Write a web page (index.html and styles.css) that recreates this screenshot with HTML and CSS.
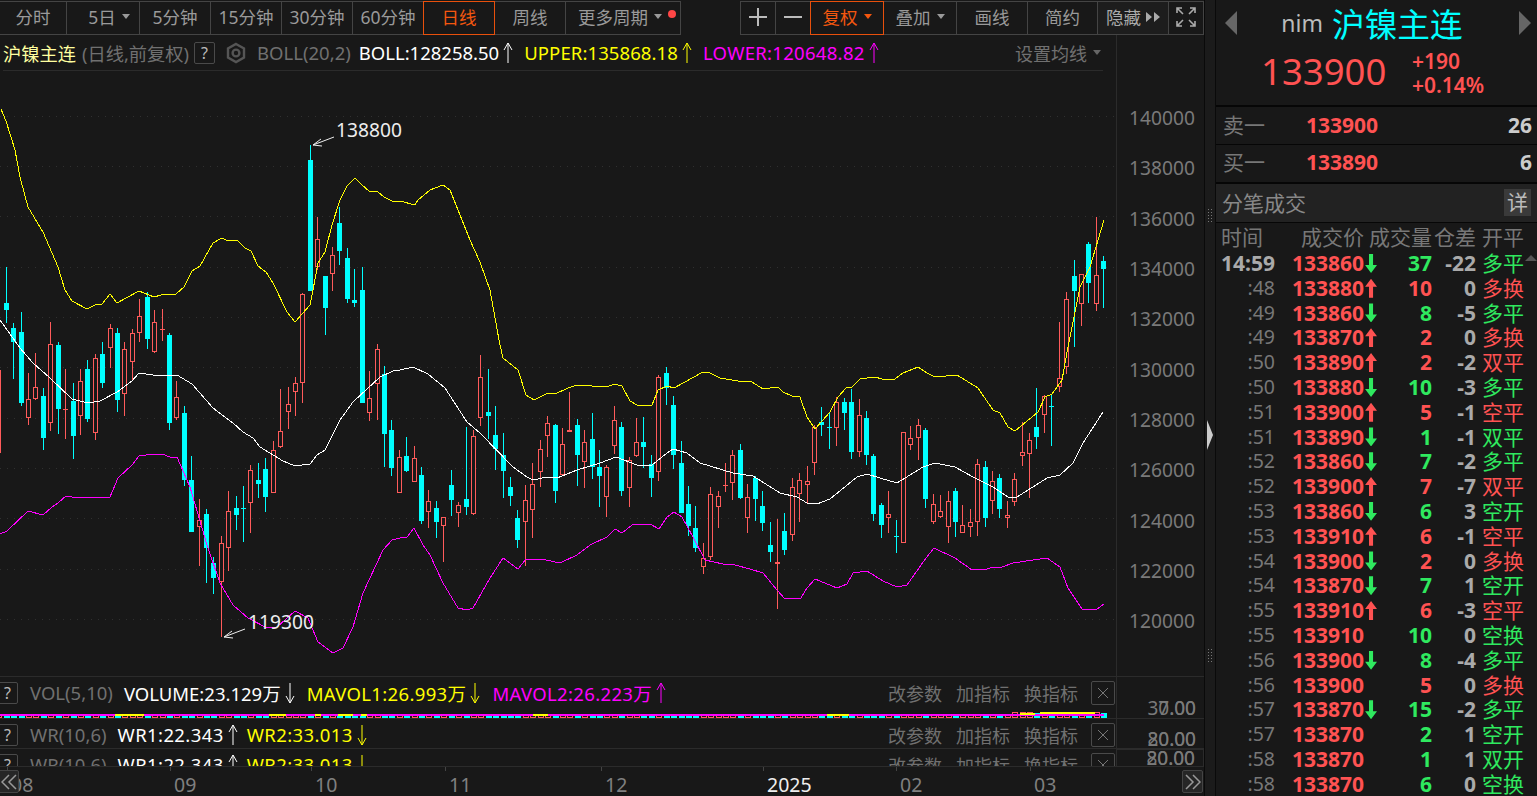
FILE: index.html
```html
<!DOCTYPE html>
<html lang="zh-CN">
  <head>
    <meta charset="UTF-8" />
    <meta name="viewport" content="width=device-width, initial-scale=1.0" />
    <title>沪镍主连 日线</title>
    <link rel="stylesheet" href="styles.css">
  </head>
  <body>
    <svg class="defs" width="0" height="0">
      <symbol id="up" viewBox="0 0 10 22"><path d="M5 1V21M1 8L5 1L9 8" fill="none" stroke="currentColor" /></symbol>
      <symbol id="down" viewBox="0 0 10 22"><path d="M5 1V21M1 14L5 21L9 14" fill="none" stroke="currentColor" /></symbol>
      <symbol id="close" viewBox="0 0 12 12"><path d="M1 1L11 11M11 1L1 11" fill="none" stroke="currentColor" /></symbol>
    </svg>

    <div class="left">
      <div class="toolbar">
        <div class="tool w68">分时</div>
        <div class="tool w74 pushed">5日<i class="caret"></i></div>
        <div class="tool w72">5分钟</div>
        <div class="tool w72">15分钟</div>
        <div class="tool w72">30分钟</div>
        <div class="tool w72">60分钟</div>
        <div class="tool w72 active">日线</div>
        <div class="tool w72">周线</div>
        <div class="tool w116 dotted">更多周期<i class="caret"></i></div>
        <div class="spacer"></div>
        <div class="tool w35">
          <svg width="18" height="18" viewBox="0 0 18 18"><path d="M0 9H18M9 0V18" stroke="#bbb" stroke-width="2" /></svg>
        </div>
        <div class="tool w35">
          <svg width="18" height="18" viewBox="0 0 18 18"><path d="M0 9H18" stroke="#bbb" stroke-width="2" /></svg>
        </div>
        <div class="tool w74 active">复权<i class="caret"></i></div>
        <div class="tool w74">叠加<i class="caret"></i></div>
        <div class="tool w72">画线</div>
        <div class="tool w71">简约</div>
        <div class="tool w72 hide">隐藏
          <svg width="14" height="12" viewBox="0 0 14 12"><path d="M0 1L6 6L0 11ZM8 1L14 6L8 11Z" fill="#aaa" /></svg>
        </div>
        <div class="tool w35">
          <svg width="22" height="22" viewBox="0 0 22 22" fill="none" stroke="#aaa" stroke-width="1.6">
            <path d="M2 7V2H7M2 2L8 8M15 2H20V7M20 2L14 8M2 15V20H7M2 20L8 14M15 20H20V15M20 20L14 14" />
          </svg>
        </div>
      </div>

      <div class="legend-row">
        <div class="legend main">
          <span class="name">沪镍主连</span>
          <span class="muted cn">(日线,前复权)</span>
          <span class="help">?</span>
          <svg class="gear" width="22" height="22" viewBox="0 0 22 22" fill="none" stroke="#555" stroke-width="2.4">
            <path d="M11 2L19 6.5V15.5L11 20L3 15.5V6.5Z" />
            <circle cx="11" cy="11" r="3.4" />
          </svg>
          <span class="muted ind">BOLL(20,2)</span>
          <span class="white">BOLL:128258.50</span><svg class="arr white"><use href="#up" /></svg>
          <span class="yellow">UPPER:135868.18</span><svg class="arr yellow"><use href="#up" /></svg>
          <span class="pink">LOWER:120648.82</span><svg class="arr pink"><use href="#up" /></svg>
          <span class="spacer"></span>
          <span class="link">设置均线</span><i class="caret"></i>
        </div>
      </div>

      <div class="chart-pane"><svg id="chart" width="1204" height="605" viewBox="0 71 1204 605"></svg></div>

      <div class="pane vol">
        <div class="pane-body">
          <div class="legend">
            <span class="help">?</span>
            <span class="muted ind">VOL(5,10)</span>
            <span class="white">VOLUME:23.129万</span><svg class="arr white"><use href="#down" /></svg>
            <span class="yellow">MAVOL1:26.993万</span><svg class="arr yellow"><use href="#down" /></svg>
            <span class="pink">MAVOL2:26.223万</span><svg class="arr pink"><use href="#up" /></svg>
            <span class="spacer"></span>
            <span class="link">改参数</span><span class="link">加指标</span><span class="link">换指标</span>
            <span class="x"><svg width="12" height="12"><use href="#close" /></svg></span>
          </div>
          <svg id="volume" width="1116" height="9" viewBox="0 710 1116 9"></svg>
        </div>
        <div class="pane-axis"><span class="tick-label low">30.00</span><span class="tick-label low">7.00</span></div>
      </div>

      <div class="pane wr">
        <div class="pane-body">
          <div class="legend">
            <span class="help">?</span>
            <span class="muted ind">WR(10,6)</span>
            <span class="white">WR1:22.343</span><svg class="arr white"><use href="#up" /></svg>
            <span class="yellow">WR2:33.013</span><svg class="arr yellow"><use href="#down" /></svg>
            <span class="spacer"></span>
            <span class="link">改参数</span><span class="link">加指标</span><span class="link">换指标</span>
            <span class="x"><svg width="12" height="12"><use href="#close" /></svg></span>
          </div>
        </div>
        <div class="pane-axis"><span class="tick-label mid">80.00</span><span class="tick-label mid">20.00</span></div>
      </div>

      <div class="pane wr cut">
        <div class="pane-body">
          <div class="legend">
            <span class="help">?</span>
            <span class="muted ind">WR(10,6)</span>
            <span class="white">WR1:22.343</span><svg class="arr white"><use href="#up" /></svg>
            <span class="yellow">WR2:33.013</span><svg class="arr yellow"><use href="#down" /></svg>
            <span class="spacer"></span>
            <span class="link">改参数</span><span class="link">加指标</span><span class="link">换指标</span>
            <span class="x"><svg width="12" height="12"><use href="#close" /></svg></span>
          </div>
        </div>
        <div class="pane-axis boxed"><span class="tick-label top">80.00</span><span class="tick-label top">20.00</span></div>
      </div>

      <div class="dates">
        <div class="month m163">08</div>
        <div class="month m141">09</div>
        <div class="month m134">10</div>
        <div class="month m156">11</div>
        <div class="month m162">12</div>
        <div class="month m133 year">2025</div>
        <div class="month m134">02</div>
        <div class="month">03</div>
        <div class="nav prev"><svg width="16" height="16" viewBox="0 0 16 16"><path d="M8 1L1 8L8 15M15 1L8 8L15 15" fill="none" stroke="#999" stroke-width="1.5" /></svg></div>
        <div class="nav next"><svg width="16" height="16" viewBox="0 0 16 16"><path d="M1 1L8 8L1 15M8 1L15 8L8 15" fill="none" stroke="#999" stroke-width="1.5" /></svg></div>
      </div>
    </div>

    <div class="splitter">
      <div class="grip"></div>
      <svg width="6" height="30" viewBox="0 0 6 30"><path d="M0 0L6 15L0 30Z" fill="#ccc" /></svg>
      <div class="grip"></div>
    </div>

    <div class="side">
      <div class="quote">
        <div class="quote-title">
          <svg width="12" height="24" viewBox="0 0 12 24"><path d="M12 0L0 12L12 24Z" fill="#666" /></svg>
          <div class="title-text"><span class="code">nim</span><span class="cname">沪镍主连</span></div>
          <svg width="12" height="24" viewBox="0 0 12 24"><path d="M0 0L12 12L0 24Z" fill="#666" /></svg>
        </div>
        <div class="quote-price">
          <div class="last">133900</div>
          <div class="change"><div>+190</div><div>+0.14%</div></div>
        </div>
      </div>
      <div class="book">
        <div class="book-row"><span class="bname">卖一</span><span class="bprice">133900</span><span class="bvol">26</span></div>
        <div class="book-row"><span class="bname">买一</span><span class="bprice">133890</span><span class="bvol">6</span></div>
      </div>
      <div class="ticks-head"><span>分笔成交</span><span class="detail">详</span></div>
      <div class="ticks">
        <div class="tick head"><span>时间</span><span>成交价</span><span>成交量</span><span>仓差</span><span>开平</span></div>
        <svg class="scroll-up" width="12" height="6" viewBox="0 0 12 6"><path d="M6 0L12 6H0Z" fill="#555" /></svg>
        <div class="tick first"><span class="t">14:59</span><span class="p">133860<i class="dn"></i></span><span class="v g">37</span><span class="d">-22</span><span class="k g">多平</span></div>
        <div class="tick"><span class="t">:48</span><span class="p">133880<i class="upa"></i></span><span class="v r">10</span><span class="d">0</span><span class="k r">多换</span></div>
        <div class="tick"><span class="t">:49</span><span class="p">133860<i class="dn"></i></span><span class="v g">8</span><span class="d">-5</span><span class="k g">多平</span></div>
        <div class="tick"><span class="t">:49</span><span class="p">133870<i class="upa"></i></span><span class="v r">2</span><span class="d">0</span><span class="k r">多换</span></div>
        <div class="tick"><span class="t">:50</span><span class="p">133890<i class="upa"></i></span><span class="v r">2</span><span class="d">-2</span><span class="k r">双平</span></div>
        <div class="tick"><span class="t">:50</span><span class="p">133880<i class="dn"></i></span><span class="v g">10</span><span class="d">-3</span><span class="k g">多平</span></div>
        <div class="tick"><span class="t">:51</span><span class="p">133900<i class="upa"></i></span><span class="v r">5</span><span class="d">-1</span><span class="k r">空平</span></div>
        <div class="tick"><span class="t">:51</span><span class="p">133890<i class="dn"></i></span><span class="v g">1</span><span class="d">-1</span><span class="k g">双平</span></div>
        <div class="tick"><span class="t">:52</span><span class="p">133860<i class="dn"></i></span><span class="v g">7</span><span class="d">-2</span><span class="k g">多平</span></div>
        <div class="tick"><span class="t">:52</span><span class="p">133900<i class="upa"></i></span><span class="v r">7</span><span class="d">-7</span><span class="k r">双平</span></div>
        <div class="tick"><span class="t">:53</span><span class="p">133860<i class="dn"></i></span><span class="v g">6</span><span class="d">3</span><span class="k g">空开</span></div>
        <div class="tick"><span class="t">:53</span><span class="p">133910<i class="upa"></i></span><span class="v r">6</span><span class="d">-1</span><span class="k r">空平</span></div>
        <div class="tick"><span class="t">:54</span><span class="p">133900<i class="dn"></i></span><span class="v r">2</span><span class="d">0</span><span class="k r">多换</span></div>
        <div class="tick"><span class="t">:54</span><span class="p">133870<i class="dn"></i></span><span class="v g">7</span><span class="d">1</span><span class="k g">空开</span></div>
        <div class="tick"><span class="t">:55</span><span class="p">133910<i class="upa"></i></span><span class="v r">6</span><span class="d">-3</span><span class="k r">空平</span></div>
        <div class="tick"><span class="t">:55</span><span class="p">133910</span><span class="v g">10</span><span class="d">0</span><span class="k g">空换</span></div>
        <div class="tick"><span class="t">:56</span><span class="p">133900<i class="dn"></i></span><span class="v g">8</span><span class="d">-4</span><span class="k g">多平</span></div>
        <div class="tick"><span class="t">:56</span><span class="p">133900</span><span class="v r">5</span><span class="d">0</span><span class="k r">多换</span></div>
        <div class="tick"><span class="t">:57</span><span class="p">133870<i class="dn"></i></span><span class="v g">15</span><span class="d">-2</span><span class="k g">多平</span></div>
        <div class="tick"><span class="t">:57</span><span class="p">133870</span><span class="v g">2</span><span class="d">1</span><span class="k g">空开</span></div>
        <div class="tick"><span class="t">:58</span><span class="p">133870</span><span class="v g">1</span><span class="d">1</span><span class="k g">双开</span></div>
        <div class="tick"><span class="t">:58</span><span class="p">133870</span><span class="v g">6</span><span class="d">0</span><span class="k g">空换</span></div>
      </div>
    </div>

    <script src="chart.js"></script>
  </body>
</html>
```

FILE: styles.css
```css
* {
  box-sizing: border-box;
}
body {
  margin: 0;
  height: 796px;
  overflow: hidden;
  display: flex;
  background: #181818;
  color: #8a8a8a;
  font-family: "Noto Sans", "Noto Sans CJK SC", sans-serif;
}
.defs {
  position: absolute;
}
.spacer {
  flex: 1;
}
.left {
  width: 1204px;
  display: flex;
  flex-direction: column;
}

/* top buttons */
.toolbar {
  display: flex;
  height: 35px;
  padding-top: 1px;
}
.tool {
  position: relative;
  display: flex;
  align-items: center;
  justify-content: center;
  gap: 6px;
  height: 34px;
  margin-left: -1px;
  padding-bottom: 3px;
  font-size: 17.5px;
  color: #9a9a9a;
  border: 1px solid #444;
}
.tool.active {
  z-index: 1;
  color: #f4570f;
  border-color: #e8500c;
}
.tool.active .caret {
  border-top-color: #f4570f;
}
.tool.pushed {
  padding-left: 12px;
}
.tool.hide {
  gap: 5px;
  color: #aaa;
  background: #1d1d1d;
}
.dotted {
  padding-right: 6px;
}
.dotted::after {
  content: "";
  position: absolute;
  right: 4px;
  top: 8px;
  width: 8px;
  height: 8px;
  border-radius: 50%;
  background: #ff4646;
}
.w35 { width: 36px; }
.w68 { width: 68px; }
.w71 { width: 71px; }
.w72 { width: 72px; }
.w74 { width: 74px; }
.w116 { width: 116px; }
.caret {
  display: inline-block;
  width: 0;
  height: 0;
  border-left: 4px solid transparent;
  border-right: 4px solid transparent;
  border-top: 5px solid #999;
}

/* legends */
.legend-row {
  width: 1117px;
  height: 36px;
  padding: 0 13px 0 3px;
  border-right: 1px solid #2b2b2b;
}
.legend {
  display: flex;
  align-items: center;
  height: 33px;
  padding-bottom: 2px;
  font-size: 18.5px;
  white-space: nowrap;
}
.legend.main {
  height: 36px;
  padding-bottom: 0;
  border-bottom: 1px solid #2b2b2b;
}
.name {
  font-size: 18.25px;
  color: #ffffa0;
  margin-right: 6px;
}
.muted {
  color: #707070;
}
.muted.cn {
  font-size: 18.25px;
}
.white { color: #fff; }
.yellow { color: #ff0; }
.pink { color: #f0f; }
.main .yellow { letter-spacing: 0.1px; }
.main .pink { letter-spacing: 0.3px; }
.vol .yellow,
.vol .pink { letter-spacing: 0.35px; }
.wr .white,
.wr .yellow { letter-spacing: 0.4px; }
.help {
  display: flex;
  align-items: center;
  justify-content: center;
  width: 21px;
  height: 22px;
  margin-left: 5px;
  font-size: 16px;
  color: #bbb;
  border: 1px solid #4a4a4a;
  border-radius: 2px;
}
.gear {
  margin-left: 10px;
}
.ind {
  margin: 0 8px 0 10px;
}
.arr {
  width: 10px;
  height: 22px;
  margin: 0 11px 0 4px;
}
.main .caret {
  margin: 0 2px 0 6px;
  border-top-color: #666;
}
.link {
  margin-left: 14px;
  font-size: 18px;
  color: #707070;
}
.x {
  display: flex;
  align-items: center;
  justify-content: center;
  width: 24px;
  height: 24px;
  margin: 0 1px 0 13px;
  color: #777;
  border: 1px solid #4a4a4a;
  border-radius: 2px;
}

/* chart and lower panes */
.chart-pane {
  height: 605px;
}
#chart,
#volume {
  display: block;
}
.chart-pane text {
  font-family: "Noto Sans", sans-serif;
  font-size: 19.2px;
}
.pane {
  display: flex;
  height: 42px;
  border-top: 1px solid #2b2b2b;
}
.pane.wr {
  height: 30px;
}
.pane.cut {
  height: 18px;
  overflow: hidden;
}
.pane-body {
  width: 1116px;
}
.pane .help {
  margin-left: -3px;
}
.pane .ind {
  margin: 0 11px 0 12px;
}
.vol .arr {
  margin-right: 12px;
}
.wr .arr {
  margin-right: 9px;
}
.pane-axis {
  position: relative;
  flex: 1;
  border-left: 1px solid #2b2b2b;
}
.pane-axis.boxed {
  border: 1px solid #2b2b2b;
  height: 18px;
}
.tick-label {
  position: absolute;
  right: 8px;
  font-size: 19px;
  line-height: 22px;
  color: #7a7a7a;
}
.tick-label.low { top: 20px; }
.tick-label.mid { top: 9px; }
.tick-label.top { top: -3px; }

/* date axis */
.dates {
  position: relative;
  display: flex;
  height: 29px;
  padding-left: 7px;
  border-top: 1px solid #2b2b2b;
}
.month {
  position: relative;
  padding: 4px 0 0 4px;
  font-size: 19.5px;
  line-height: 27px;
  color: #808080;
}
.month::before {
  content: "";
  position: absolute;
  left: 0;
  top: 0;
  width: 1px;
  height: 4px;
  background: #444;
}
.month.year {
  color: #eee;
}
.m133 { width: 133px; }
.m134 { width: 134px; }
.m141 { width: 141px; }
.m156 { width: 156px; }
.m162 { width: 162px; }
.m163 { width: 163px; }
.nav {
  position: absolute;
  top: 3px;
  display: flex;
  align-items: center;
  justify-content: center;
  width: 21px;
  height: 23px;
  background: #262626;
  border: 1px solid #444;
  border-radius: 2px;
}
.nav.prev { left: -2px; }
.nav.next { right: 1px; }

/* splitter */
.splitter {
  width: 12px;
  border-left: 1px solid #0a0a0a;
  border-right: 1px solid #0a0a0a;
  background: #1b1b1b;
  display: flex;
  flex-direction: column;
  align-items: center;
  justify-content: space-between;
  padding: 208px 0 134px;
}
.grip {
  width: 6px;
  height: 14px;
  background-image: radial-gradient(#777 1px, transparent 1px);
  background-size: 3px 3px;
}

/* right panel */
.side {
  flex: 1;
  overflow: hidden;
}
.quote {
  height: 107px;
  border-bottom: 2px solid #060606;
}
.quote-title {
  display: flex;
  align-items: center;
  justify-content: space-between;
  height: 50px;
  padding: 0 6px 4px 9px;
}
.title-text {
  display: flex;
  align-items: center;
  gap: 9px;
  margin-right: 12px;
}
.code {
  font-size: 23px;
  color: #bbb;
}
.cname {
  font-size: 32.7px;
  color: #0ff;
}
.quote-price {
  display: flex;
  align-items: flex-start;
  padding-left: 45px;
  color: #ff5252;
}
.last {
  width: 151px;
  margin-top: -1px;
  font-size: 36.5px;
  line-height: 44px;
}
.change {
  font-size: 21px;
  font-weight: 600;
  line-height: 23.5px;
}
.book-row {
  display: flex;
  align-items: center;
  height: 38px;
  padding: 0 5px 2px 7px;
  border-bottom: 1px solid #060606;
  font-size: 21px;
}
.book-row:last-child {
  height: 39px;
  padding-bottom: 4px;
  border-bottom: 2px solid #060606;
}
.bname {
  width: 83px;
  margin-bottom: 1px;
  color: #777;
}
.bprice {
  flex: 1;
  font-weight: 700;
  color: #ff5252;
}
.bvol {
  font-weight: 700;
  color: #ccc;
}
.ticks-head {
  display: flex;
  align-items: center;
  justify-content: space-between;
  height: 39px;
  padding: 0 6px 1px;
  background: #222;
  border-bottom: 1px solid #060606;
  font-size: 21px;
  color: #888;
}
.ticks-head span:first-child {
  margin-bottom: 2px;
}
.detail {
  width: 27px;
  height: 27px;
  line-height: 27px;
  text-align: center;
  color: #bbb;
  background: #3a3a3a;
}

/* tick list */
.ticks {
  position: relative;
  padding-top: 2px;
}
.scroll-up {
  position: absolute;
  right: 0;
  top: 32px;
}
.tick {
  display: grid;
  grid-template-columns: 59px 102px 55px 44px 1fr;
  height: 24.8px;
  font-size: 21px;
  line-height: 24.8px;
  font-weight: 700;
  white-space: nowrap;
}
.tick.head {
  height: 26px;
  font-weight: 400;
  color: #777;
}
.tick.head span:nth-child(1) { padding-left: 5px; }
.tick.head span:nth-child(2) { padding-left: 26px; }
.tick.head span:nth-child(3) { justify-self: end; }
.tick.head span:nth-child(4) { justify-self: end; }
.tick.head span:nth-child(5) { padding-left: 6px; }
.t {
  text-align: right;
  font-size: 19.5px;
  font-weight: 400;
  color: #777;
}
.first .t {
  font-size: 21px;
  font-weight: 700;
  color: #aaa;
}
.p {
  display: flex;
  align-items: center;
  padding-left: 17px;
  color: #ff5252;
}
.v,
.d {
  text-align: right;
}
.d {
  color: #aaa;
}
.k {
  padding-left: 6px;
  font-weight: 400;
}
.g { color: #2fe95f; }
.r { color: #ff5252; }
.dn,
.upa {
  display: block;
  width: 12px;
  height: 19px;
  margin-left: 1px;
}
.dn {
  background: #2fe95f;
  clip-path: polygon(33% 0, 67% 0, 67% 58%, 100% 58%, 50% 100%, 0 58%, 33% 58%);
}
.upa {
  background: #ff5252;
  clip-path: polygon(50% 0, 100% 42%, 67% 42%, 67% 100%, 33% 100%, 33% 42%, 0 42%);
}
```

FILE: chart.js
```js
// one row per day: [high, body top, body bottom, low, 1 = red hollow / 0 = cyan]
const candles = [
  [370,370,453,453,1],
  [267,303,310,323,0],[323,328,342,379,0],[312,332,403,406,0],[373,399,418,425,1],[353,387,399,400,1],
  [388,396,438,450,0],[322,344,423,431,1],[342,345,409,434,0],[369,409,409,439,1],[383,401,436,459,0],
  [369,381,416,435,1],[360,369,419,422,0],[354,358,433,440,1],[342,354,383,388,0],[324,328,348,368,1],
  [328,333,400,412,0],[342,349,394,416,1],[329,333,362,380,1],[299,316,333,342,1],[292,297,339,349,0],
  [310,322,352,353,1],[309,329,329,341,1],[333,335,423,430,0],[381,397,418,420,1],[406,413,480,486,0],
  [456,480,532,532,0],[499,520,527,566,1],[509,514,548,583,0],[557,563,578,594,0],[536,543,582,637,1],
  [491,511,548,571,1],[496,508,515,530,0],[486,508,508,542,0],[465,470,503,533,1],[463,480,484,498,0],
  [458,469,497,512,0],[441,450,493,493,1],[389,431,447,448,1],[387,404,412,429,1],[377,383,392,416,1],
  [293,294,383,403,1],[145,160,291,291,0],[217,239,267,270,1],[276,276,308,335,0],[247,255,274,291,1],
  [207,223,251,265,0],[248,258,299,303,0],[269,300,303,307,0],[267,290,403,403,0],[371,398,413,421,1],
  [344,349,384,420,1],[366,374,434,467,0],[420,430,468,476,0],[450,457,493,493,1],[437,456,471,472,0],
  [446,458,482,482,1],[467,475,521,524,0],[490,501,512,528,1],[501,508,522,538,0],[517,517,526,562,1],
  [470,485,500,516,0],[502,505,513,527,1],[427,499,507,515,0],[430,436,514,515,1],[355,377,418,426,1],
  [369,412,416,439,0],[406,435,449,470,0],[433,455,471,498,0],[477,487,496,506,0],[510,518,540,548,0],
  [485,500,522,566,1],[463,484,510,538,1],[440,449,472,487,1],[416,423,436,457,1],[424,425,491,503,0],
  [428,444,475,476,1],[392,430,432,432,1],[419,425,455,486,0],[430,442,462,488,1],[413,439,467,479,0],
  [450,467,476,507,0],[465,467,497,517,1],[406,420,446,454,1],[422,427,491,496,0],[457,460,488,507,1],
  [418,442,456,457,1],[417,442,447,468,0],[455,464,478,497,0],[375,377,472,481,1],[367,373,388,405,0],
  [396,405,455,469,0],[441,463,513,513,0],[486,504,526,536,0],[506,528,548,552,0],[543,558,567,574,1],
  [487,494,557,560,1],[491,496,507,528,1],[463,485,485,492,1],[450,455,483,500,1],[444,450,498,499,0],
  [484,497,518,533,1],[476,478,499,521,0],[491,506,523,531,0],[522,545,552,562,0],[519,562,564,609,1],
  [513,531,550,555,0],[478,487,535,541,1],[473,480,494,522,1],[466,481,485,503,1],[425,427,463,475,1],
  [407,422,425,436,0],[413,427,427,449,0],[397,402,428,446,1],[398,402,413,430,0],[389,402,452,459,0],
  [399,415,452,457,1],[411,418,455,465,0],[454,456,514,521,0],[503,505,525,538,0],[491,514,518,533,1],
  [520,536,536,553,0],[432,432,543,543,1],[426,438,445,450,1],[419,425,438,460,1],[428,430,499,508,0],
  [494,504,522,524,1],[495,511,517,518,1],[491,501,527,543,1],[488,491,522,537,0],[505,525,533,533,1],
  [509,522,527,537,1],[459,464,522,536,1],[461,467,518,527,0],[471,481,501,514,1],[474,478,509,518,0],
  [501,515,518,528,1],[473,479,502,506,1],[422,452,456,466,1],[433,440,454,498,1],[388,427,437,449,0],
  [395,396,415,433,1],[395,406,406,446,0],[322,378,387,392,1],[292,299,367,374,1],[260,276,291,347,0],
  [274,274,304,326,1],[242,244,283,303,0],[217,275,304,311,1],[256,261,269,308,0]
];

const upper = "1,109 6,121 15,150 20,177 28,207 43,232 58,267 65,290 72,301 87,309 95,305 102,304 110,294 117,303 139,291 154,297 161,295 176,294 184,287 192,271 200,266 213,243 222,238 228,241 237,240 245,248 251,251 258,266 266,272 273,283 287,312 295,322 310,305 313,290 318,263 325,252 332,225 340,200 347,186 355,178 362,185 369,191 377,191 384,197 392,201 400,201 415,205 418,200 430,190 443,185 450,190 460,215 470,240 480,262 490,290 499,340 503,358 518,370 526,395 534,400 548,393 555,394 568,388 577,385 607,387 614,384 622,386 630,401 637,405 652,405 658,390 667,386 674,388 703,372 708,372 720,378 738,381 752,382 763,389 778,387 783,392 792,396 800,397 807,417 815,429 830,412 838,397 846,388 852,387 860,379 875,377 882,379 895,379 903,373 918,367 927,373 935,377 957,375 978,388 993,410 1000,413 1008,427 1015,431 1038,412 1045,397 1052,394 1062,380 1068,347 1080,287 1090,267 1104,220";
const boll = "0,320 20,348 33,363 50,378 72,399 88,403 100,401 117,392 132,381 139,373 153,375 177,375 192,384 213,408 233,423 243,432 253,438 260,447 283,461 295,466 310,464 317,455 325,450 340,420 353,402 380,377 393,371 400,370 413,367 428,374 445,388 467,422 480,433 513,467 527,477 533,480 547,477 557,478 577,470 600,463 616,457 637,465 652,465 667,453 673,449 687,453 700,463 733,473 753,476 780,493 797,497 807,503 817,504 830,499 857,477 867,474 880,478 897,483 923,467 935,463 955,467 973,477 993,487 1008,497 1017,497 1047,478 1060,475 1073,463 1083,443 1103,412";
const lower = "0,534 7,531 28,511 43,515 52,507 58,503 66,496 72,497 82,497 110,497 118,478 132,465 139,456 153,454 162,454 170,457 177,457 190,487 207,545 220,583 233,605 248,618 267,628 277,627 295,611 308,618 318,642 333,653 343,648 353,627 363,593 383,550 392,540 400,538 407,537 414,528 423,545 430,555 443,583 458,608 467,610 473,608 490,578 503,558 518,569 526,559 542,559 555,562 562,562 577,555 590,545 607,537 615,529 622,533 632,525 650,524 659,529 667,517 674,512 682,517 693,537 705,560 723,564 735,565 750,569 763,573 777,590 785,599 801,598 807,588 815,579 837,588 847,584 853,573 867,571 883,581 897,587 907,585 926,558 934,548 955,558 972,570 987,569 993,567 1002,567 1013,563 1033,560 1047,558 1060,567 1068,588 1082,609 1097,609 1104,604";

const RED = "#ff5b5b";
const CYAN = "#00ffff";
const columnOf = (i) => Math.floor(6.3 + 7.415 * (i - 1));

function candleSvg(c, i) {
  const [hi, top, bot, lo, up] = c;
  const x = columnOf(i);
  const color = up ? RED : CYAN;
  let out = `<rect x="${x}" y="${hi}" width="1" height="${lo - hi}" fill="${color}" />`;
  if (top === bot) {
    out += `<rect x="${x - 2}" y="${top}" width="5" height="1" fill="${color}" />`;
  } else if (up) {
    out += `<rect x="${x - 2}" y="${top}" width="5" height="${bot - top}" fill="#181818" />`;
    out += `<rect x="${x - 1.5}" y="${top + 0.5}" width="4" height="${bot - top - 1}" fill="none" stroke="${color}" />`;
  } else {
    out += `<rect x="${x - 2}" y="${top}" width="5" height="${bot - top}" fill="${color}" />`;
  }
  return out;
}

function drawChart() {
  let out = "";
  // dotted grid with the price axis beside it
  for (let k = 0; k < 11; k++) {
    const y = 115.5 + 50.35 * k;
    const row = Math.round(y) + 0.5;
    out += `<line x1="0" x2="1116" y1="${row}" y2="${row}" stroke="#303030" stroke-dasharray="1 6" />`;
    out += `<text x="1129" y="${y + 9.3}" fill="#7a7a7a">${140000 - k * 2000}</text>`;
  }
  out += `<line x1="1116.5" x2="1116.5" y1="71" y2="676" stroke="#2b2b2b" />`;
  out += `<g shape-rendering="crispEdges">${candles.map(candleSvg).join("")}`;
  [[upper, "#ffff00"], [boll, "#ffffff"], [lower, "#ff00ff"]].forEach(([pts, color]) => {
    out += `<polyline points="${pts}" fill="none" stroke="${color}" />`;
  });
  out += "</g>";
  // high and low marks
  out += `<path d="M334 137L313 145M321 139L313 145L322 146M245 629L224 637M232 631L224 637L233 638" fill="none" stroke="#eee" />`;
  out += `<text x="336" y="137" fill="#eee">138800</text>`;
  out += `<text x="248" y="629" fill="#eee">119300</text>`;
  document.getElementById("chart").innerHTML = out;
}

function drawVolume() {
  let out = "";
  const tall = (i) => (i > 136 ? 5 : 3);
  candles.forEach((c, i) => {
    const x = columnOf(i);
    const h = tall(i);
    if (c[4]) {
      out += `<rect x="${x - 1.5}" y="${717.5 - h}" width="5" height="${h}" fill="none" stroke="${RED}" />`;
    } else {
      out += `<rect x="${x - 2}" y="${718 - h}" width="6" height="${h}" fill="${CYAN}" />`;
    }
  });
  out += `<rect x="0" y="714" width="1104" height="2" fill="#ff00ff" />`;
  [[115, 29, 714], [269, 17, 714], [315, 6, 714], [338, 15, 714], [361, 6, 714], [533, 15, 714], [827, 22, 714], [1020, 15, 713], [1040, 55, 712]].forEach(([x, w, y]) => {
    out += `<rect x="${x}" y="${y}" width="${w}" height="2" fill="#ffff00" />`;
  });
  out += `<line x1="1116.5" x2="1116.5" y1="710" y2="719" stroke="#2b2b2b" />`;
  document.getElementById("volume").innerHTML = `<g shape-rendering="crispEdges">${out}</g>`;
}

drawChart();
drawVolume();
```
